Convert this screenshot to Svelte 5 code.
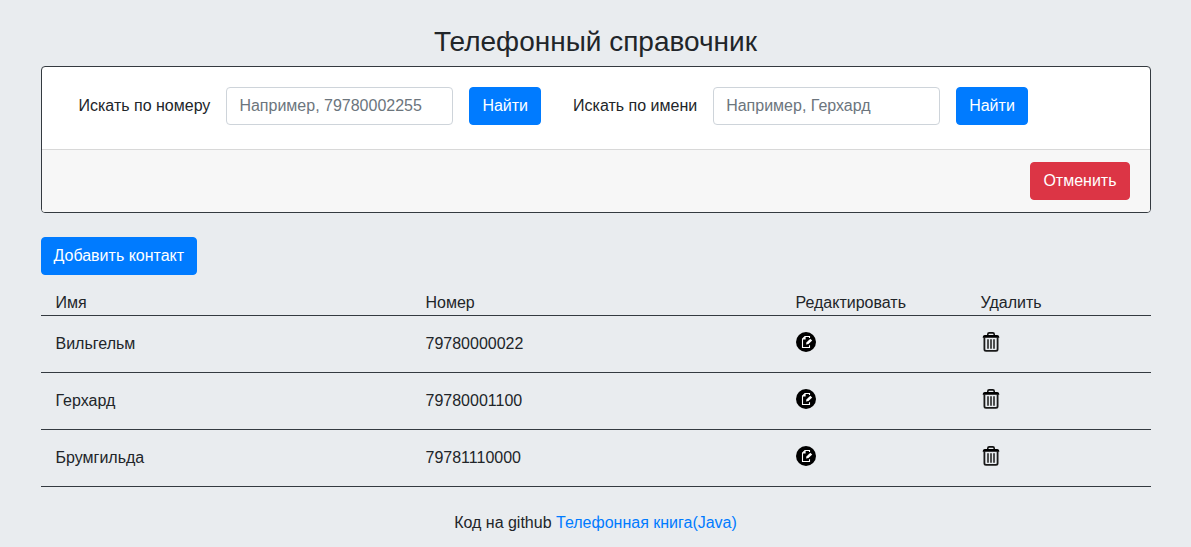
<script>
  const contacts = [
    { name: 'Вильгельм', phone: '79780000022' },
    { name: 'Герхард', phone: '79780001100' },
    { name: 'Брумгильда', phone: '79781110000' }
  ];
  const searches = [
    { id: 'phone', label: 'Искать по номеру', hint: 'Например, 79780002255' },
    { id: 'name', label: 'Искать по имени', hint: 'Например, Герхард' }
  ];
</script>

<main class="container">
  <h3>Телефонный справочник</h3>

  <section class="card">
    <div class="card-body">
      {#each searches as s}
        <form class="search">
          <label for={s.id}>{s.label}</label>
          <input id={s.id} type="text" placeholder={s.hint} />
          <button type="button" class="btn primary">Найти</button>
        </form>
      {/each}
    </div>
    <div class="card-footer">
      <button type="button" class="btn danger">Отменить</button>
    </div>
  </section>

  <button type="button" class="btn primary add">Добавить контакт</button>

  <div class="row head">
    <div>Имя</div>
    <div>Номер</div>
    <div>Редактировать</div>
    <div>Удалить</div>
  </div>
  {#each contacts as c}
    <div class="row item">
      <div>{c.name}</div>
      <div>{c.phone}</div>
      <div>
        <svg class="icon" viewBox="0 0 20 20" role="img" aria-label="Редактировать">
          <circle cx="10" cy="10" r="10" fill="#000" />
          <path d="M13.5 6V4.5H9L6.5 7V15.5H13.5V13.2" fill="none" stroke="#fff" stroke-width="1.1" />
          <path d="M6.5 7.6V7L9 4.5H9.6V7.6Z" fill="#fff" />
          <path d="M10 12.6L10.6 10.2L14.3 6.8L16.2 8.4L12.5 12Z" fill="#fff" />
        </svg>
      </div>
      <div>
        <svg class="icon" viewBox="0 0 20 20" role="img" aria-label="Удалить">
          <path d="M6.8 3.6V2.3Q6.8 .9 8.2 .9H11.8Q13.2 .9 13.2 2.3V3.6" fill="none" stroke="#111" stroke-width="1.6" />
          <path d="M3.6 2.9H16.4Q18.4 3.1 18.4 5.7H1.6Q1.6 3.1 3.6 2.9Z" fill="#000" />
          <path d="M3.4 5V17.3Q3.4 18.9 5 18.9H15Q16.6 18.9 16.6 17.3V5" fill="none" stroke="#1a1a1a" stroke-width="1.8" />
          <path d="M7 7.2V16.8M10 7.2V16.8M13 7.2V16.8" fill="none" stroke="#1a1a1a" stroke-width="1.5" />
        </svg>
      </div>
    </div>
  {/each}

  <footer>Код на github <a href="#github">Телефонная книга(Java)</a></footer>
</main>

<style>
  :global(body) {
    margin: 0;
    background: #e9ecef;
    color: #212529;
    font: 16px/1.5 "Liberation Sans", Arial, sans-serif;
  }
  .container, .container * {
    box-sizing: border-box;
  }
  .container {
    width: 1140px;
    margin: 0 auto;
    padding: 25px 15px 0;
  }
  h3 {
    margin: 0 0 7px;
    font-size: 28px;
    font-weight: 500;
    line-height: 1.2;
    text-align: center;
  }
  .card {
    background: #fff;
    border: 1px solid #343a40;
    border-radius: 4px;
    margin-bottom: 24px;
  }
  .card-body {
    display: flex;
    gap: 32px;
    padding: 20px 37px 24px;
  }
  .search {
    display: flex;
    align-items: center;
    gap: 16px;
  }
  input {
    width: 227px;
    height: 38px;
    padding: 6px 12px;
    border: 1px solid #ced4da;
    border-radius: 4px;
    background: #fff;
    font: inherit;
    color: #495057;
  }
  input::placeholder {
    color: #6c757d;
    opacity: 1;
  }
  .btn {
    display: block;
    height: 38px;
    padding: 6px 12px;
    border: 1px solid transparent;
    border-radius: 4px;
    font: inherit;
    color: #fff;
  }
  .primary {
    background: #007bff;
    border-color: #007bff;
  }
  .danger {
    background: #dc3545;
    border-color: #dc3545;
  }
  .card-footer {
    display: flex;
    justify-content: flex-end;
    padding: 12px 20px;
    background: #f7f7f7;
    border-top: 1px solid #d8d8d8;
    border-radius: 0 0 3px 3px;
  }
  .add {
    margin-bottom: 16px;
  }
  .row {
    display: grid;
    grid-template-columns: 4fr 4fr 2fr 2fr;
    border-bottom: 1px solid #343a40;
  }
  .row > div {
    height: 24px;
    padding: 0 15px;
  }
  .item {
    padding: 16px 0;
  }
  .icon {
    display: block;
    width: 20px;
    height: 20px;
  }
  footer {
    margin-top: 24px;
    text-align: center;
  }
  a {
    color: #007bff;
    text-decoration: none;
  }
</style>
